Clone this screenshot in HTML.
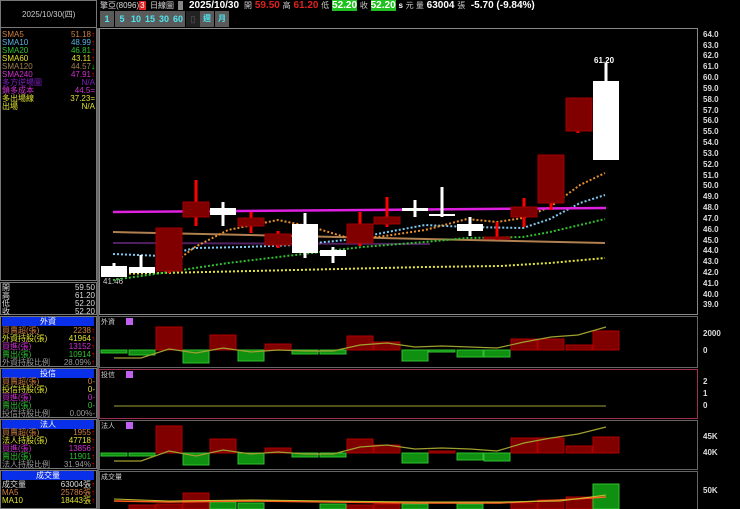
<!DOCTYPE html>
<html><head><meta charset="utf-8"><style>
*{margin:0;padding:0;box-sizing:border-box}
body{width:740px;height:509px;background:#000;overflow:hidden;position:relative;font-family:"Liberation Sans","Noto Sans CJK TC",sans-serif;color:#ddd}
.a{position:absolute;white-space:nowrap}
.s{font-size:8px;line-height:8px}
.r{text-align:right}
.hd{position:absolute;left:2px;width:92px;height:9px;background:#0a2fe8;color:#fff;font-size:8px;line-height:9px;text-align:center}
.btn{position:absolute;top:11px;width:14px;height:16px;background:#5a5a5a;color:#4ee6f0;font-size:9px;line-height:16px;text-align:center;font-weight:bold}
</style></head><body>
<!-- left frames -->
<div class="a" style="left:0;top:0;width:97px;height:28px;border:1px solid #777"></div>
<div class="a s" style="left:22px;top:11px;color:#ccc">2025/10/30(四)</div>
<div class="a" style="left:0;top:28px;width:97px;height:253px;border:1px solid #777;border-top:none"></div>
<div class="a" style="left:97px;top:28px;width:2px;height:481px;background:#666"></div>
<div class="a s" style="left:2px;top:31px;line-height:8px">
<div style="color:#d08040">SMA5</div><div style="color:#5ab0e0">SMA10</div><div style="color:#30c030">SMA20</div><div style="color:#e0e030">SMA60</div><div style="color:#a08050">SMA120</div><div style="color:#d030d0">SMA240</div><div style="color:#8020c0">多方逆場圖</div><div style="color:#d030d0">鎖多成本</div><div style="color:#e0e030">多出場線</div><div style="color:#e0e030">出場</div></div>
<div class="a s r" style="left:40px;top:31px;width:55px">
<div style="color:#d08040">51.18<span style="color:#f00">↑</span></div><div style="color:#5ab0e0">48.99<span style="color:#f00">↑</span></div><div style="color:#30c030">46.81<span style="color:#f00">↑</span></div><div style="color:#e0e030">43.11<span style="color:#f00">↑</span></div><div style="color:#a08050">44.57<span style="color:#0f0">↓</span></div><div style="color:#d030d0">47.91<span style="color:#f00">↑</span></div><div style="color:#8020c0">N/A</div><div style="color:#d030d0">44.5=</div><div style="color:#e0e030">37.23=</div><div style="color:#e0e030">N/A</div></div>
<!-- OHLC -->
<div class="a" style="left:0;top:282px;width:97px;height:33px;border:1px solid #777"></div>
<div class="a s" style="left:2px;top:284px"><div>開</div><div>高</div><div>低</div><div>收</div></div>
<div class="a s r" style="left:40px;top:284px;width:55px"><div>59.50</div><div>61.20</div><div>52.20</div><div>52.20</div></div>
<!-- sections -->
<div class="a" style="left:0;top:316px;width:97px;height:51px;border:1px solid #777"></div>
<div class="hd" style="top:317px">外資</div>
<div class="a s" style="left:2px;top:327px"><div style="color:#d08040">買賣超(張)</div><div style="color:#e0e030">外資持股(張)</div><div style="color:#d030d0">買進(張)</div><div style="color:#30c030">賣出(張)</div><div style="color:#999">外資持股比例</div></div>
<div class="a s r" style="left:40px;top:327px;width:55px"><div style="color:#d08040">2238<span style="color:#f00">↑</span></div><div style="color:#e0e030">41964<span style="color:#f00">↑</span></div><div style="color:#d030d0">13152<span style="color:#f00">↑</span></div><div style="color:#30c030">10914<span style="color:#f00">↑</span></div><div style="color:#999">28.09%<span style="color:#f00">↑</span></div></div>
<div class="a" style="left:0;top:368px;width:97px;height:50px;border:1px solid #777"></div>
<div class="hd" style="top:369px">投信</div>
<div class="a s" style="left:2px;top:378px"><div style="color:#d08040">買賣超(張)</div><div style="color:#e0e030">投信持股(張)</div><div style="color:#d030d0">買進(張)</div><div style="color:#30c030">賣出(張)</div><div style="color:#999">投信持股比例</div></div>
<div class="a s r" style="left:40px;top:378px;width:55px"><div style="color:#d08040">0-</div><div style="color:#e0e030">0-</div><div style="color:#d030d0">0-</div><div style="color:#30c030">0-</div><div style="color:#999">0.00%-</div></div>
<div class="a" style="left:0;top:419px;width:97px;height:50px;border:1px solid #777"></div>
<div class="hd" style="top:420px">法人</div>
<div class="a s" style="left:2px;top:429px"><div style="color:#d08040">買賣超(張)</div><div style="color:#e0e030">法人持股(張)</div><div style="color:#d030d0">買進(張)</div><div style="color:#30c030">賣出(張)</div><div style="color:#999">法人持股比例</div></div>
<div class="a s r" style="left:40px;top:429px;width:55px"><div style="color:#d08040">1955<span style="color:#f00">↑</span></div><div style="color:#e0e030">47718<span style="color:#f00">↑</span></div><div style="color:#d030d0">13856<span style="color:#f00">↑</span></div><div style="color:#30c030">11901<span style="color:#f00">↑</span></div><div style="color:#999">31.94%<span style="color:#f00">↑</span></div></div>
<div class="a" style="left:0;top:470px;width:97px;height:39px;border:1px solid #777"></div>
<div class="hd" style="top:471px">成交量</div>
<div class="a s" style="left:2px;top:481px"><div>成交量</div><div style="color:#d08040">MA5</div><div style="color:#e0e030">MA10</div></div>
<div class="a s r" style="left:40px;top:481px;width:55px"><div>63004張<span style="color:#f00">↑</span></div><div style="color:#d08040">25786張<span style="color:#f00">↑</span></div><div style="color:#e0e030">18443張<span style="color:#f00">↑</span></div></div>
<!-- top bar -->
<div class="a" style="left:100px;top:1px;font-size:8px;line-height:9px;color:#ddd">擎亞(8096)<span style="background:#e02020;color:#fff;padding:0 1px">3</span>&nbsp;&nbsp;日線圖&nbsp;&nbsp;<span style="background:#888;color:#888">■</span></div>
<div class="a" style="left:189px;top:0px;font-size:10px;line-height:11px;font-weight:bold;color:#fff">2025/10/30 <span style="font-size:8px;font-weight:normal;color:#ccc">&nbsp;開</span> <span style="color:#e02020">59.50</span> <span style="font-size:8px;font-weight:normal;color:#ccc">高</span> <span style="color:#e02020">61.20</span> <span style="font-size:8px;font-weight:normal;color:#ccc">低</span> <span style="background:#20c020;color:#fff">52.20</span> <span style="font-size:8px;font-weight:normal;color:#ccc">收</span> <span style="background:#20c020;color:#fff">52.20</span> <span style="font-size:8px">s</span> <span style="font-size:8px;font-weight:normal;color:#ccc">元 量</span> 63004 <span style="font-size:8px;font-weight:normal;color:#ccc">張</span> &nbsp;-5.70 (-9.84%)</div>
<div class="btn" style="left:100px">1</div><div class="btn" style="left:115px">5</div><div class="btn" style="left:129px">10</div><div class="btn" style="left:143px">15</div><div class="btn" style="left:157px">30</div><div class="btn" style="left:171px">60</div>
<div class="btn" style="left:186px;background:#222;color:#444">▯</div><div class="btn" style="left:200px;font-size:8px">週</div><div class="btn" style="left:215px;font-size:8px">月</div>
<svg class="a" style="left:0;top:0" width="740" height="509">
<g fill="none">
<rect x="99.5" y="28.5" width="598" height="286" stroke="#888"/>
<rect x="99.5" y="316.5" width="598" height="51" stroke="#666"/>
<rect x="99.5" y="369.5" width="598" height="49" stroke="#a03050"/>
<rect x="99.5" y="420.5" width="598" height="49" stroke="#666"/>
<rect x="99.5" y="471.5" width="598" height="40" stroke="#666"/>
</g>
<g font-family="Liberation Sans" font-size="8" fill="#ddd" font-weight="bold">
<text x="703" y="37">64.0</text><text x="703" y="48">63.0</text><text x="703" y="58">62.0</text><text x="703" y="69">61.0</text><text x="703" y="80">60.0</text><text x="703" y="91">59.0</text><text x="703" y="102">58.0</text><text x="703" y="113">57.0</text><text x="703" y="123">56.0</text><text x="703" y="134">55.0</text><text x="703" y="145">54.0</text><text x="703" y="156">53.0</text><text x="703" y="167">52.0</text><text x="703" y="178">51.0</text><text x="703" y="188">50.0</text><text x="703" y="199">49.0</text><text x="703" y="210">48.0</text><text x="703" y="221">47.0</text><text x="703" y="232">46.0</text><text x="703" y="243">45.0</text><text x="703" y="253">44.0</text><text x="703" y="264">43.0</text><text x="703" y="275">42.0</text><text x="703" y="286">41.0</text><text x="703" y="297">40.0</text><text x="703" y="307">39.0</text>
<text x="703" y="336">2000</text><text x="703" y="353">0</text>
<text x="703" y="384">2</text><text x="703" y="396">1</text><text x="703" y="408">0</text>
<text x="703" y="439">45K</text><text x="703" y="455">40K</text><text x="703" y="493">50K</text>
<text x="594" y="63" fill="#fff">61.20</text><text x="103" y="284" fill="#ccc" font-weight="normal">41.46</text>
</g>
<g font-size="7" fill="#ccc" font-family="Noto Sans CJK TC"><text x="101" y="324">外資</text><text x="101" y="377">投信</text><text x="101" y="428">法人</text><text x="101" y="479">成交量</text></g>
<g fill="#c060f0"><rect x="126" y="318" width="7" height="7"/><rect x="126" y="371" width="7" height="7"/><rect x="126" y="422" width="7" height="7"/></g>
<!-- MA lines -->
<line x1="113" y1="232" x2="605" y2="243" stroke="#b08050" stroke-width="2"/>
<line x1="113" y1="243" x2="430" y2="244" stroke="#502060" stroke-width="2"/>
<polyline points="113,274 162,273 295,270 425,267 500,266 550,263 605,258" fill="none" stroke="#e8e830" stroke-width="2" stroke-dasharray="2,2"/>
<polyline points="113,280 162,273 228,263 295,255 362,247 425,242 467,238 523,237 550,232 580,225 605,219" fill="none" stroke="#30c030" stroke-width="2" stroke-dasharray="2,2"/>
<polyline points="113,254 162,256 195,248 245,247 295,245 345,240 425,225 467,227 523,228 550,219 580,203 605,195" fill="none" stroke="#80c8f0" stroke-width="2" stroke-dasharray="2,2"/>
<polyline points="113,267 140,270 167,268 195,247 228,230 278,220 312,227 345,237 378,237 425,230 467,219 497,222 523,218 550,207 580,185 605,173" fill="none" stroke="#e89030" stroke-width="2" stroke-dasharray="2,2"/>
<line x1="113" y1="212" x2="606" y2="208" stroke="#e020e0" stroke-width="2.5"/>
<!-- wicks -->
<g stroke="#fff" stroke-width="3">
<line x1="114" y1="263" x2="114" y2="277"/><line x1="141" y1="255" x2="141" y2="273"/><line x1="223" y1="202" x2="223" y2="226"/><line x1="305" y1="213" x2="305" y2="258"/><line x1="333" y1="247" x2="333" y2="263"/><line x1="415" y1="200" x2="415" y2="217"/><line x1="442" y1="187" x2="442" y2="217"/><line x1="470" y1="217" x2="470" y2="236"/><line x1="606" y1="63" x2="606" y2="82"/>
</g>
<g stroke="#f00" stroke-width="3">
<line x1="196" y1="180" x2="196" y2="226"/><line x1="251" y1="212" x2="251" y2="233"/><line x1="278" y1="231" x2="278" y2="248"/><line x1="360" y1="212" x2="360" y2="246"/><line x1="387" y1="197" x2="387" y2="227"/><line x1="497" y1="222" x2="497" y2="240"/><line x1="524" y1="198" x2="524" y2="227"/><line x1="551" y1="200" x2="551" y2="210"/><line x1="169" y1="268" x2="169" y2="273"/><line x1="578" y1="128" x2="578" y2="133"/>
</g>
<g fill="#800000" stroke="#a00000">
<rect x="156" y="228" width="26" height="43"/><rect x="183" y="202" width="26" height="15"/><rect x="238" y="218" width="26" height="8"/><rect x="265" y="234" width="26" height="11"/><rect x="347" y="224" width="26" height="19"/><rect x="374" y="217" width="26" height="7"/><rect x="484" y="237" width="26" height="2"/><rect x="511" y="207" width="26" height="10"/><rect x="538" y="155" width="26" height="48"/><rect x="566" y="98" width="26" height="33"/>
</g>
<g fill="#fff">
<rect x="101" y="266" width="26" height="11"/><rect x="129" y="267" width="26" height="6"/><rect x="210" y="208" width="26" height="7"/><rect x="292" y="224" width="26" height="29"/><rect x="320" y="250" width="26" height="6"/><rect x="402" y="208" width="26" height="3"/><rect x="429" y="214" width="26" height="2"/><rect x="457" y="224" width="26" height="7"/><rect x="593" y="81" width="26" height="79"/>
</g>
<!-- 外資 bars -->
<g fill="#800000" stroke="#b00000">
<rect x="156" y="327" width="26" height="23"/><rect x="210" y="335" width="26" height="15"/><rect x="265" y="344" width="26" height="6"/><rect x="347" y="336" width="26" height="14"/><rect x="374" y="342" width="26" height="8"/><rect x="511" y="339" width="26" height="11"/><rect x="538" y="339" width="26" height="11"/><rect x="566" y="345" width="26" height="5"/><rect x="593" y="331" width="26" height="19"/>
<rect x="156" y="426" width="26" height="27"/><rect x="210" y="439" width="26" height="14"/><rect x="265" y="448" width="26" height="5"/><rect x="347" y="439" width="26" height="14"/><rect x="374" y="445" width="26" height="8"/><rect x="429" y="451" width="26" height="2"/><rect x="511" y="438" width="26" height="15"/><rect x="538" y="438" width="26" height="15"/><rect x="566" y="446" width="26" height="7"/><rect x="593" y="437" width="26" height="16"/>
<rect x="183" y="493" width="26" height="16"/><rect x="566" y="497" width="26" height="12"/><rect x="538" y="500" width="26" height="9"/><rect x="511" y="503" width="26" height="6"/><rect x="374" y="504" width="26" height="5"/><rect x="347" y="505" width="26" height="4"/><rect x="129" y="505" width="26" height="4"/><rect x="156" y="504" width="26" height="5"/>
</g>
<g fill="#109010" stroke="#30c030">
<rect x="101" y="350" width="26" height="3"/><rect x="129" y="350" width="26" height="5"/><rect x="183" y="350" width="26" height="13"/><rect x="238" y="350" width="26" height="11"/><rect x="292" y="350" width="26" height="4"/><rect x="320" y="350" width="26" height="4"/><rect x="402" y="350" width="26" height="11"/><rect x="429" y="350" width="26" height="2"/><rect x="457" y="350" width="26" height="7"/><rect x="484" y="350" width="26" height="7"/>
<rect x="101" y="453" width="26" height="3"/><rect x="129" y="453" width="26" height="3"/><rect x="183" y="453" width="26" height="12"/><rect x="238" y="453" width="26" height="11"/><rect x="292" y="453" width="26" height="4"/><rect x="320" y="453" width="26" height="4"/><rect x="402" y="453" width="26" height="10"/><rect x="457" y="453" width="26" height="7"/><rect x="484" y="453" width="26" height="8"/>
<rect x="593" y="484" width="26" height="25"/><rect x="210" y="502" width="26" height="7"/><rect x="238" y="503" width="26" height="6"/><rect x="320" y="504" width="26" height="5"/><rect x="402" y="504" width="26" height="5"/><rect x="457" y="504" width="26" height="5"/>
</g>
<polyline points="114,358 141,358 169,349 196,353 223,348 251,352 278,350 305,351 333,351 360,345 387,343 415,347 442,346 470,347 497,348 524,342 551,337 578,335 606,327" fill="none" stroke="#a0a030" stroke-width="1.2"/>
<polyline points="114,461 141,461 169,451 196,456 223,450 251,454 278,452 305,454 333,454 360,447 387,445 415,449 442,448 470,449 497,451 524,443 551,438 578,434 606,427" fill="none" stroke="#a0a030" stroke-width="1.2"/>
<line x1="114" y1="406" x2="606" y2="406" stroke="#a0a030"/>
<polyline points="114,501 169,502 250,501 330,502 420,503 500,503 560,500 606,497" fill="none" stroke="#ff6020" stroke-width="1.5"/>
<polyline points="114,499 169,501 250,500 330,501 420,502 500,502 560,501 606,495" fill="none" stroke="#c0c030" stroke-width="1"/>
</svg>
</body></html>
